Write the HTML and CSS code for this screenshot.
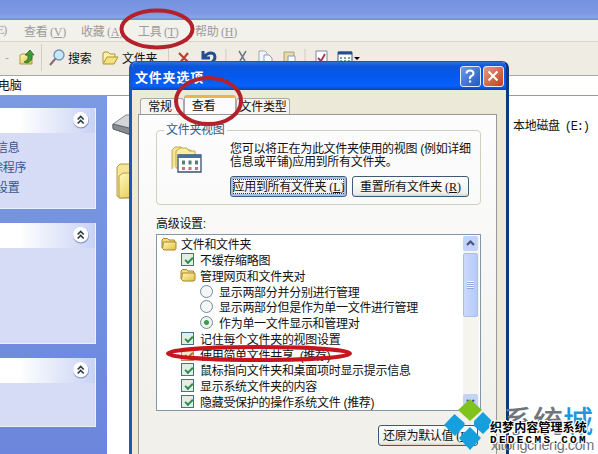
FILE: index.html
```
<!DOCTYPE html>
<html lang="zh-CN">
<head>
  <meta charset="utf-8">
  <title>文件夹选项</title>
  <link rel="stylesheet" href="styles.css">
</head>
<body>

  <svg width="0" height="0" class="defs">
    <linearGradient id="gold" x1="0" y1="0" x2="1" y2="1">
      <stop offset="0" stop-color="#fffbc0"/><stop offset="1" stop-color="#e2bd3c"/>
    </linearGradient>
    <symbol id="folder" viewBox="0 0 16 14">
      <path d="M1 11V3l1.500-1.500h4L8 3h5.500v8" fill="#f3dc7e" stroke="#a8842a"/>
      <path d="M2.500 5H15v6.500L14 13H3L1.500 11.500z" fill="url(#gold)" stroke="#a8842a"/>
    </symbol>
    <symbol id="chevron" viewBox="0 0 18 18">
      <circle cx="9" cy="9.500" r="8" fill="#8e9cc4"/>
      <circle cx="8.700" cy="8.700" r="7.600" fill="#fff"/>
      <path d="M5.700 8.500l3-3 3 3M5.700 12.500l3-3 3 3" fill="none" stroke="#2c3d46" stroke-width="1.700"/>
    </symbol>
  </svg>

  <div class="titlebar"></div>
  <div class="menubar">
    <span class="m-fav">(E)</span>
    <span class="m-view">查看 (<u>V</u>)</span>
    <span class="m-col">收藏 (<u>A</u>)</span>
    <span class="m-tool">工具 (<u>T</u>)</span>
    <span>帮助 (<u>H</u>)</span>
  </div>
  <div class="toolbar">
    <span class="drop">-</span>
    <svg class="up" width="16" height="17" viewBox="0 0 16 17">
      <path d="M1 15V6l2-1h4l1 2h5v8z" fill="url(#gold)" stroke="#b09a45"/>
      <path d="M5 13q5-2 4-7H6l5-5 4 5h-2q1 6-5 8z" fill="#3c9c35" stroke="#23631f" stroke-width=".7"/>
    </svg>
    <i class="sep"></i>
    <svg class="find" width="16" height="17" viewBox="0 0 16 17">
      <path d="M7 9l-6 7" stroke="#8a6675" stroke-width="2"/>
      <circle cx="10" cy="6" r="5" fill="#c7e8fa" stroke="#6c93b8" stroke-width="1.300"/>
    </svg>
    <span class="t-find">搜索</span>
    <svg class="open" width="17" height="14" viewBox="0 0 17 14">
      <path d="M1 12V2l2-1h3l2 2h5v3" fill="#fff3a5" stroke="#ad913d"/>
      <path d="M1 13l4-7h11l-4 7z" fill="#f6e27b" stroke="#ad913d"/>
    </svg>
    <span class="t-folder">文件夹</span>
    <i class="sep"></i>
    <svg class="tools" width="190" height="17" viewBox="0 0 190 17">
      <path d="M4 4l10 10M13 4L4 15" stroke="#b8452f" stroke-width="2.200"/>
      <path d="M28 2v7h7M29 8q5-6 10-3 3 5-3 9" fill="none" stroke="#244e91" stroke-width="3"/>
      <path d="M51 0v17" stroke="#cfccc0"/>
      <path d="M64 2l6 10M71 2l-6 10" stroke="#717986" stroke-width="1.500"/>
      <path d="M84 2h6l2 2v9h-8z" fill="#f3f5fa" stroke="#a1aabb"/>
      <path d="M89 6h5l3 3v7h-8z" fill="#fff" stroke="#8d9bb8"/>
      <path d="M109 3h10v11h-10z" fill="#e5dca8" stroke="#aaa27d"/>
      <path d="M113 7h7v9h-7z" fill="#fff" stroke="#8d9bb8"/>
      <path d="M130 0v17" stroke="#cfccc0"/>
      <path d="M141 2h11v13h-11z" fill="#fff" stroke="#7787b0"/>
      <path d="M143 9l3 3 4-7" fill="none" stroke="#aa3155" stroke-width="1.800"/>
      <path d="M163 3h14v12h-14z" fill="#fff" stroke="#375686"/>
      <path d="M163 4h14" stroke="#264d8b" stroke-width="3"/>
      <path d="M165 9h10M165 12h10" stroke="#528773" stroke-width="1.500" stroke-dasharray="2 2"/>
      <path d="M179 8h6l-3 3z"/>
    </svg>
  </div>
  <div class="address">电脑</div>

  <div class="main">
    <div class="sidebar">
      <div class="panel p1">
        <div class="phead"><svg width="18" height="18"><use href="#chevron"/></svg></div>
        <ul>
          <li>信息</li>
          <li class="cut">除程序</li>
          <li>设置</li>
        </ul>
      </div>
      <div class="panel p2">
        <div class="phead"><svg width="18" height="18"><use href="#chevron"/></svg></div>
      </div>
      <div class="panel p3">
        <div class="phead"><svg width="18" height="18"><use href="#chevron"/></svg></div>
      </div>
    </div>
    <div class="files">
      <svg class="drives" width="30" height="90" viewBox="0 0 30 90">
        <path d="M1 10L14 1h14v19H16L1 14z" fill="#d4d5d8" stroke="#84878c"/>
        <path d="M1 10l16 4h11v6H16L1 15z" fill="#888c92" stroke="#5c6066"/>
        <path d="M5 82V53l3-3h20v34H8z" fill="#f6e594" stroke="#b49a4a"/>
        <path d="M7 84V62l4-3h17v24z" fill="url(#gold)" stroke="#b49a4a"/>
      </svg>
      <span class="disk">本地磁盘 <tt>(E:)</tt></span>
    </div>
  </div>

  <div class="dialog">
    <div class="dhead">
      <b>文件夹选项</b>
      <span class="wbtn help"><svg width="18" height="18" viewBox="0 0 18 18"><path d="M5.500 6.500q0-3 3.500-3t3.500 3q0 1.500-2 2.500T9 12" fill="none" stroke="#fff" stroke-width="2"/><path d="M8 13.500h2.200v2H8z" fill="#fff"/></svg></span>
      <span class="wbtn close"><svg width="18" height="18" viewBox="0 0 18 18"><path d="M4.500 4.500l9 9M13.500 4.500l-9 9" stroke="#fff" stroke-width="2"/></svg></span>
    </div>
    <div class="dbody">
      <div class="tabs">
        <span class="tab t1">常规</span>
        <span class="tab active">查看</span>
        <span class="tab t3">文件类型</span>
      </div>
      <div class="pane">
        <fieldset>
          <legend>文件夹视图</legend>
          <svg class="viewicon" width="32" height="30" viewBox="0 0 32 30">
            <path d="M2 24V5l3-3h6l2 3h8v4" fill="#f5e493" stroke="#c1aa55"/>
            <path d="M6 23V6l4-3h7l2 3h6v17z" fill="#fbeea2" stroke="#c1aa55"/>
            <path d="M8 10h23v17H8z" fill="#fff" stroke="#38506e" stroke-width="1.300"/>
            <path d="M8 11.500h23" stroke="#46709d" stroke-width="3"/>
            <path d="M12 17.500h16" stroke="#567e76" stroke-width="4" stroke-dasharray="3 3.500"/>
            <path d="M12 23.500h16" stroke="#c77173" stroke-width="3" stroke-dasharray="3 3.500"/>
          </svg>
          <div class="grp">
            <p>您可以将正在为此文件夹使用的视图 (例如详细<br>信息或平铺)应用到所有文件夹。</p>
            <div class="btns">
              <button class="btn focus">应用到所有文件夹 <tt>(<u>L</u>)</tt></button>
              <button class="btn">重置所有文件夹 <tt>(<u>R</u>)</tt></button>
            </div>
          </div>
        </fieldset>
        <div class="label">高级设置:</div>
        <div class="list">
          <div class="rows">
            <div class="row l0"><svg width="16" height="14"><use href="#folder"/></svg>文件和文件夹</div>
            <div class="row l1"><i class="chk"></i>不缓存缩略图</div>
            <div class="row l1"><svg width="16" height="14"><use href="#folder"/></svg>管理网页和文件夹对</div>
            <div class="row l2"><i class="radio"></i>显示两部分并分别进行管理</div>
            <div class="row l2"><i class="radio"></i>显示两部分但是作为单一文件进行管理</div>
            <div class="row l2"><i class="radio on"></i>作为单一文件显示和管理对</div>
            <div class="row l1"><i class="chk"></i>记住每个文件夹的视图设置</div>
            <div class="row l1"><i class="chk marked"></i>使用简单文件共享&nbsp; (推荐)</div>
            <div class="row l1"><i class="chk"></i>鼠标指向文件夹和桌面项时显示提示信息</div>
            <div class="row l1"><i class="chk"></i>显示系统文件夹的内容</div>
            <div class="row l1"><i class="chk"></i>隐藏受保护的操作系统文件 (推荐)</div>
          </div>
          <div class="scroll">
            <span class="sbtn"><svg width="15" height="15" viewBox="0 0 15 15"><path d="M4 9l3.500-3.500L11 9" fill="none" stroke="#42557f" stroke-width="2.200"/></svg></span>
            <span class="thumb"><i></i></span>
            <span class="sbtn down"><svg width="15" height="15" viewBox="0 0 15 15"><path d="M4 6l3.500 3.500L11 6" fill="none" stroke="#42557f" stroke-width="2.200"/></svg></span>
          </div>
        </div>
        <button class="btn restore">还原为默认值 <tt>(<u>D</u>)</tt></button>
      </div>
    </div>
  </div>

  <!-- red marker circles -->
  <svg class="marks" width="598" height="454" viewBox="0 0 598 454">
    <g fill="none" stroke="#b5212b">
      <ellipse cx="157" cy="29" rx="35.500" ry="18.500" stroke-width="4"/>
      <ellipse cx="208.500" cy="101" rx="32.500" ry="23" stroke-width="4"/>
      <ellipse cx="259" cy="353.500" rx="91" ry="6.500" stroke="#c8141c" stroke-width="4"/>
    </g>
  </svg>

  <div class="logo">
    <svg width="56" height="54" viewBox="0 0 56 54">
      <path d="M26 0l12 11-12 11-12-11z" fill="#7fc31c"/>
      <path d="M10.500 15l10 9v3l-9.500 10L0 26zM39 13l11 11-11 11-9-8v-5z" fill="#159fdc"/>
      <path d="M26 28l11 11-11 12-11-12z" fill="#159fdc"/>
    </svg>
  </div>
  <div class="brand">
    <span class="big">系统<em>城</em></span>
    <span class="url">xitongcheng.com</span>
  </div>
  <div class="stamp">
    <span>织梦内容管理系统</span>
    <span class="dede">DEDECMS.COM</span>
  </div>

</body>
</html>
```
FILE: styles.css
```
* { box-sizing: border-box; }
body {
  margin: 0;
  width: 598px;
  height: 454px;
  overflow: hidden;
  position: relative;
  background: #fff;
  color: #111;
  font: 12px "Liberation Sans", "Noto Sans CJK SC", sans-serif;
  letter-spacing: -0.3px;
  white-space: nowrap;
}
tt { font-family: "Liberation Serif", serif; letter-spacing: 0; }
.defs { position: absolute; }
.titlebar {
  height: 20px;
  background: linear-gradient(#7592df, #7e9ae4 70%, #87a5e9 85%, #6f8bc9);
}
.menubar {
  height: 22px;
  background: #f2f1ec;
  border-bottom: 1px solid #d8d5cb;
  color: #9b9b99;
  display: flex;
  align-items: center;
  font-family: "Liberation Serif", "Noto Sans CJK SC", serif;
}
.m-fav { width: 24px; margin-left: -6px; letter-spacing: -1px; }
.m-view { width: 57px; margin-left: 6px; }
.m-col { width: 57px; }
.m-tool { width: 57px; }
.toolbar {
  height: 34px;
  background: #efede3;
  border-bottom: 1px solid #a9a9a2;
  display: flex;
  align-items: center;
  padding-bottom: 2px;
}
.toolbar svg { flex: none; }
.drop { width: 19px; padding-left: 5px; color: #aaa; }
.sep { width: 1px; height: 27px; background: #d0cdc1; }
.up { margin-right: 6px; }
.find { margin: 0 3px 0 7px; }
.t-find { width: 34px; }
.open { margin-right: 3px; }
.t-folder { width: 46px; }
.tools { margin-left: 6px; }
.address {
  height: 20px;
  line-height: 20px;
  border-bottom: 1px solid #8f9bb2;
  margin-left: -2px;
}
.main { display: flex; height: 358px; }
.sidebar {
  width: 107px;
  padding-top: 12px;
  background: linear-gradient(#7b9ae2, #6b86dc);
}
.panel { width: 96px; background: #d6dcf6; border: solid #edf0fc; border-width: 0 1px 1px 0; }
.phead {
  height: 25px;
  background: linear-gradient(90deg, #fff 20%, #c8d2f4);
  border-radius: 0 3px 0 0;
  padding: 3px 0 0 72px;
}
.p1 { height: 101px; margin-bottom: 14px; }
.p2 { height: 121px; margin-bottom: 14px; }
.p3 { height: 69px; }
.panel ul { list-style: none; margin: 5px 0 0 -4px; padding: 0; color: #37558f; }
.panel li { height: 20px; line-height: 20px; }
.panel li.cut { margin-left: -5px; }
.files { flex: 1; display: flex; align-items: flex-start; }
.drives { margin: 18px 0 0 5px; }
.disk { margin: 20px 0 0 371px; }
.disk tt { margin-left: 2px; font-family: "Liberation Mono", monospace; letter-spacing: -1.2px; }

.dialog {
  position: absolute;
  left: 129px;
  top: 61px;
  width: 380px;
  height: 400px;
  border: 3px solid #1c55bd;
  border-right-color: #123781;
  border-top-width: 1px;
  border-radius: 7px 7px 0 0;
  background: #ece9d8;
  overflow: hidden;
}
.dhead {
  height: 28px;
  margin: 0 -3px;
  padding: 0 5px 0 6px;
  display: flex;
  align-items: center;
  gap: 2px;
  color: #fff;
  background: linear-gradient(#2c70dc, #0b55dc 15%, #0458ee 50%, #0463fb 85%, #0a45b8);
}
.dhead b { flex: 1; font-size: 13px; letter-spacing: 0.8px; }
.wbtn {
  width: 21px;
  height: 21px;
  border: 1px solid #e4ecfa;
  border-radius: 3px;
  background: linear-gradient(135deg, #6c9bec, #2056c5);
}
.wbtn.close { background: linear-gradient(135deg, #e69a83, #c43e1b); }
.dbody { padding: 5px 9px 0 6px; background: #ece9d8; }
.tabs { display: flex; align-items: flex-end; height: 19px; }
.tab {
  height: 16px;
  line-height: 17px;
  background: #f6f5ef;
  border: 1px solid #a8abad;
  border-bottom: 0;
  border-radius: 3px 3px 0 0;
  text-align: center;
}
.t1 { width: 44px; margin-left: 2px; padding-right: 4px; }
.t3 { width: 54px; }
.tab.active {
  width: 52px;
  height: 19px;
  background: #fcfcfc;
  border-top: 3px solid #eeb34d;
  padding-right: 13px;
  line-height: 16px;
}
.pane {
  height: 346px;
  border: 1px solid #96989a;
  background: linear-gradient(#fdfdfe, #f7f6f4 50%, #f1f0ea 85%);
  padding: 8px 15px 0 17px;
  display: flex;
  flex-direction: column;
}
fieldset {
  position: relative;
  height: 82px;
  margin: 0;
  padding: 7px 0 0 13px;
  min-width: 0;
  border: 1px solid #d0d0be;
  border-radius: 4px;
  display: flex;
}
legend { color: #36597f; padding: 0 2px; margin-left: -6px; line-height: 14px; }
.viewicon { flex: none; margin: 1px 28px 0 0; }
.grp p { margin: -1px 0 0; line-height: 12.5px; }
.btns { display: flex; gap: 5px; margin-top: 8px; }
.btn {
  width: 117px;
  height: 21px;
  padding: 0 0 2px;
  border: 1px solid #3c5b78;
  border-radius: 3px;
  background: linear-gradient(#fff, #f0f0ea 85%, #d8d5c8);
  color: #111;
  font: inherit;
  letter-spacing: -0.3px;
  white-space: nowrap;
}
.btn.focus { box-shadow: inset 0 0 0 2px #a7bde4; outline: 1px dotted #333; outline-offset: -4px; }
.label { height: 29px; line-height: 39px; }
.list {
  height: 177px;
  border: 1px solid #8298a8;
  background: #fff;
  display: flex;
  padding: 1px;
}
.rows { flex: 1; }
.row { height: 15.75px; display: flex; align-items: center; gap: 4px; }
.l0 { padding-left: 3px; }
.l1 { padding-left: 22px; }
.l2 { padding-left: 41px; }
.chk, .radio { flex: none; width: 13px; height: 13px; border: 1px solid #4a7088; background: #e0eee5; }
.chk { margin: 0 2px 0 1px; position: relative; }
.chk::after {
  content: "";
  position: absolute;
  left: 3px;
  top: 3px;
  width: 6px;
  height: 3px;
  border: solid #2d8a4c;
  border-width: 0 0 2px 2px;
  transform: rotate(-45deg);
}
.chk.marked { background: #f6e6cf; border-color: #c08a5c; }
.chk.marked::after { border-color: #a8742f; }
.radio { border-radius: 50%; margin: 0 2px 0 1px; background: #f4f6f5; border-color: #71899c; }
.radio.on { background: radial-gradient(#3b9c50 2px, #edf5ee 3px); }
.scroll { width: 16px; background: #f5f4ee; display: flex; flex-direction: column; }
.sbtn { width: 15px; height: 15px; border-radius: 2px; background: #c3d3f8; }
.sbtn.down { margin-top: auto; }
.thumb {
  height: 64px;
  width: 15px;
  margin-top: 2px;
  border: 1px solid #a9bde8;
  border-radius: 2px;
  background: linear-gradient(90deg, #cbd9fb, #b7caf5);
  display: flex;
  align-items: center;
  justify-content: center;
}
.thumb i { width: 7px; height: 8px; background: repeating-linear-gradient(#f1f5ff 0 1px, #8fa7dc 1px 2px); }
.restore { width: 100px; margin: 14px 0 0 222px; flex: none; }

.marks { position: absolute; left: 0; top: 0; }

/* watermark */
.logo { position: absolute; left: 444px; top: 399px; }
.brand { position: absolute; left: 503px; top: 403px; color: #70757b; }
.big {
  display: block;
  font: 500 30px/32px "Noto Sans CJK SC", sans-serif;
  letter-spacing: 0;
}
.big em { font-style: normal; color: #1c96dc; }
.url { display: block; margin: 0 0 0 -12px; font-size: 14.5px; line-height: 20px; letter-spacing: -0.45px; }
.stamp {
  position: absolute;
  left: 490px;
  top: 419px;
  color: #000;
  font: bold 12px/15px "Noto Sans CJK SC", sans-serif;
  letter-spacing: 0.1px;
  text-shadow: 1px 0 #fff, -1px 0 #fff, 0 1px #fff, 0 -1px #fff, 1px 1px #fff, -1px -1px #fff, 1px -1px #fff, -1px 1px #fff;
}
.stamp span { display: block; }
.dede { font: bold 11px/12px "Liberation Mono", monospace; letter-spacing: 2.3px; }
```
